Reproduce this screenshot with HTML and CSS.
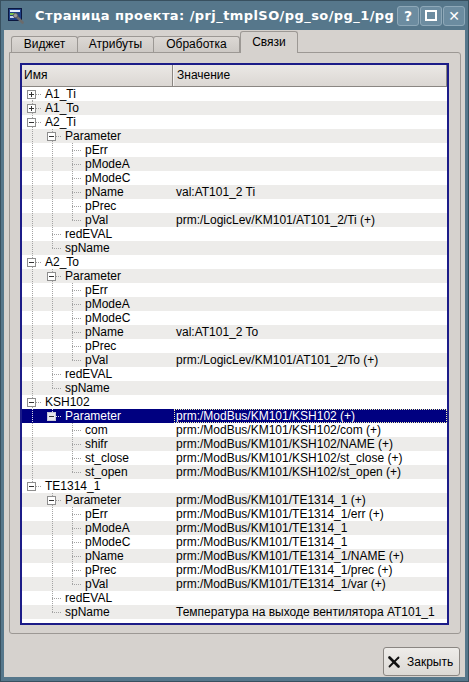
FILE: index.html
```html
<!DOCTYPE html>
<html lang="ru">
<head>
<meta charset="utf-8">
<title>Страница проекта</title>
<link rel="stylesheet" href="styles.css">
</head>
<body>
<div class="window">
  <div class="titlebar">
    <svg class="appicon" width="16" height="16" viewBox="0 0 16 16">
      <rect x="0.5" y="0.5" width="13" height="12" fill="#1f3f86" stroke="#0b173f"/>
      <rect x="2" y="2" width="10" height="2" fill="#e8f0ff"/>
      <rect x="2" y="5" width="6" height="2" fill="#7cc24a"/>
      <rect x="2" y="8" width="4" height="2" fill="#c8d4ec"/>
      <path d="M7.5 7.5 L14.5 14.5" stroke="#6b6b6b" stroke-width="2.6" stroke-linecap="round"/>
      <circle cx="7.5" cy="7.5" r="2.2" fill="#9a9a9a" stroke="#555" stroke-width="0.8"/>
    </svg>
    <div class="title">Страница проекта: /prj_tmplSO/pg_so/pg_1/pg</div>
    <div class="tbtn">?</div>
    <div class="tbtn"><span class="sq"></span></div>
    <div class="tbtn x">✕</div>
  </div>
  <div class="client">
    <div class="tabs">
      <div class="tab w1">Виджет</div>
      <div class="tab w2">Атрибуты</div>
      <div class="tab w3">Обработка</div>
      <div class="tab on">Связи</div>
    </div>
    <div class="pane">
      <div class="tree">
        <div class="hdr"><div class="hc1">Имя</div><div class="hc2">Значение</div></div>
        <div class="rows">
          <div class="row"><div class="nm"><span class="b f"><i class="box pl"></i></span><span class="t">A1_Ti</span></div><div class="vl"></div></div>
          <div class="row"><div class="nm"><span class="b tt"><i class="box pl"></i></span><span class="t">A1_To</span></div><div class="vl"></div></div>
          <div class="row"><div class="nm"><span class="b tt"><i class="box"></i></span><span class="t">A2_Ti</span></div><div class="vl"></div></div>
          <div class="row"><div class="nm"><span class="b v"></span><span class="b tt"><i class="box"></i></span><span class="t">Parameter</span></div><div class="vl"></div></div>
          <div class="row"><div class="nm"><span class="b v"></span><span class="b v"></span><span class="b tt"></span><span class="t">pErr</span></div><div class="vl"></div></div>
          <div class="row"><div class="nm"><span class="b v"></span><span class="b v"></span><span class="b tt"></span><span class="t">pModeA</span></div><div class="vl"></div></div>
          <div class="row"><div class="nm"><span class="b v"></span><span class="b v"></span><span class="b tt"></span><span class="t">pModeC</span></div><div class="vl"></div></div>
          <div class="row"><div class="nm"><span class="b v"></span><span class="b v"></span><span class="b tt"></span><span class="t">pName</span></div><div class="vl">val:AT101_2 Ti</div></div>
          <div class="row"><div class="nm"><span class="b v"></span><span class="b v"></span><span class="b tt"></span><span class="t">pPrec</span></div><div class="vl"></div></div>
          <div class="row"><div class="nm"><span class="b v"></span><span class="b v"></span><span class="b l"></span><span class="t">pVal</span></div><div class="vl">prm:/LogicLev/KM101/AT101_2/Ti (+)</div></div>
          <div class="row"><div class="nm"><span class="b v"></span><span class="b tt"></span><span class="t">redEVAL</span></div><div class="vl"></div></div>
          <div class="row"><div class="nm"><span class="b v"></span><span class="b l"></span><span class="t">spName</span></div><div class="vl"></div></div>
          <div class="row"><div class="nm"><span class="b tt"><i class="box"></i></span><span class="t">A2_To</span></div><div class="vl"></div></div>
          <div class="row"><div class="nm"><span class="b v"></span><span class="b tt"><i class="box"></i></span><span class="t">Parameter</span></div><div class="vl"></div></div>
          <div class="row"><div class="nm"><span class="b v"></span><span class="b v"></span><span class="b tt"></span><span class="t">pErr</span></div><div class="vl"></div></div>
          <div class="row"><div class="nm"><span class="b v"></span><span class="b v"></span><span class="b tt"></span><span class="t">pModeA</span></div><div class="vl"></div></div>
          <div class="row"><div class="nm"><span class="b v"></span><span class="b v"></span><span class="b tt"></span><span class="t">pModeC</span></div><div class="vl"></div></div>
          <div class="row"><div class="nm"><span class="b v"></span><span class="b v"></span><span class="b tt"></span><span class="t">pName</span></div><div class="vl">val:AT101_2 To</div></div>
          <div class="row"><div class="nm"><span class="b v"></span><span class="b v"></span><span class="b tt"></span><span class="t">pPrec</span></div><div class="vl"></div></div>
          <div class="row"><div class="nm"><span class="b v"></span><span class="b v"></span><span class="b l"></span><span class="t">pVal</span></div><div class="vl">prm:/LogicLev/KM101/AT101_2/To (+)</div></div>
          <div class="row"><div class="nm"><span class="b v"></span><span class="b tt"></span><span class="t">redEVAL</span></div><div class="vl"></div></div>
          <div class="row"><div class="nm"><span class="b v"></span><span class="b l"></span><span class="t">spName</span></div><div class="vl"></div></div>
          <div class="row"><div class="nm"><span class="b tt"><i class="box"></i></span><span class="t">KSH102</span></div><div class="vl"></div></div>
          <div class="row sel"><div class="nm"><span class="b v"></span><span class="b l"><i class="box"></i></span><span class="t">Parameter</span></div><div class="vl">prm:/ModBus/KM101/KSH102 (+)</div></div>
          <div class="row"><div class="nm"><span class="b v"></span><span class="b"></span><span class="b tt"></span><span class="t">com</span></div><div class="vl">prm:/ModBus/KM101/KSH102/com (+)</div></div>
          <div class="row"><div class="nm"><span class="b v"></span><span class="b"></span><span class="b tt"></span><span class="t">shifr</span></div><div class="vl">prm:/ModBus/KM101/KSH102/NAME (+)</div></div>
          <div class="row"><div class="nm"><span class="b v"></span><span class="b"></span><span class="b tt"></span><span class="t">st_close</span></div><div class="vl">prm:/ModBus/KM101/KSH102/st_close (+)</div></div>
          <div class="row"><div class="nm"><span class="b v"></span><span class="b"></span><span class="b l"></span><span class="t">st_open</span></div><div class="vl">prm:/ModBus/KM101/KSH102/st_open (+)</div></div>
          <div class="row"><div class="nm"><span class="b l"><i class="box"></i></span><span class="t">TE1314_1</span></div><div class="vl"></div></div>
          <div class="row"><div class="nm"><span class="b"></span><span class="b tt"><i class="box"></i></span><span class="t">Parameter</span></div><div class="vl">prm:/ModBus/KM101/TE1314_1 (+)</div></div>
          <div class="row"><div class="nm"><span class="b"></span><span class="b v"></span><span class="b tt"></span><span class="t">pErr</span></div><div class="vl">prm:/ModBus/KM101/TE1314_1/err (+)</div></div>
          <div class="row"><div class="nm"><span class="b"></span><span class="b v"></span><span class="b tt"></span><span class="t">pModeA</span></div><div class="vl">prm:/ModBus/KM101/TE1314_1</div></div>
          <div class="row"><div class="nm"><span class="b"></span><span class="b v"></span><span class="b tt"></span><span class="t">pModeC</span></div><div class="vl">prm:/ModBus/KM101/TE1314_1</div></div>
          <div class="row"><div class="nm"><span class="b"></span><span class="b v"></span><span class="b tt"></span><span class="t">pName</span></div><div class="vl">prm:/ModBus/KM101/TE1314_1/NAME (+)</div></div>
          <div class="row"><div class="nm"><span class="b"></span><span class="b v"></span><span class="b tt"></span><span class="t">pPrec</span></div><div class="vl">prm:/ModBus/KM101/TE1314_1/prec (+)</div></div>
          <div class="row"><div class="nm"><span class="b"></span><span class="b v"></span><span class="b l"></span><span class="t">pVal</span></div><div class="vl">prm:/ModBus/KM101/TE1314_1/var (+)</div></div>
          <div class="row"><div class="nm"><span class="b"></span><span class="b tt"></span><span class="t">redEVAL</span></div><div class="vl"></div></div>
          <div class="row"><div class="nm"><span class="b"></span><span class="b l"></span><span class="t">spName</span></div><div class="vl">Температура на выходе вентилятора АТ101_1</div></div>
        </div>
      </div>
    </div>
    <div class="footer">
      <div class="btn">
        <svg class="xic" width="12" height="12" viewBox="0 0 12 12">
          <path d="M1.5 1.5 L10.5 10.5" stroke="#111" stroke-width="2.6" stroke-linecap="round"/>
          <path d="M10.5 1.5 L1.5 10.5" stroke="#111" stroke-width="1.8" stroke-linecap="round"/>
        </svg>
        <span>Закрыть</span>
      </div>
    </div>
  </div>
</div>
</body>
</html>
```
FILE: styles.css
```css
html, body {
  margin: 0;
  padding: 0;
}
body {
  width: 469px;
  height: 682px;
  overflow: hidden;
  font-family: "Liberation Sans", Arial, sans-serif;
  font-size: 12px;
  color: #000;
}
.window {
  width: 469px;
  height: 682px;
  box-sizing: border-box;
  background: #56778b;
  border: 1px solid #38505f;
  padding: 0 3px 4px 3px;
  display: flex;
  flex-direction: column;
}
.titlebar {
  height: 29px;
  display: flex;
  align-items: center;
  flex: none;
}
.appicon {
  flex: none;
  margin-left: 4px;
  margin-top: 1px;
}
.title {
  flex: 1;
  min-width: 0;
  margin-left: 11px;
  margin-right: 2px;
  overflow: hidden;
  white-space: nowrap;
  color: #fff;
  font-family: "DejaVu Sans", sans-serif;
  font-weight: bold;
  font-size: 13px;
  letter-spacing: 0.42px;
}
.tbtn {
  flex: none;
  width: 20px;
  height: 18px;
  margin-left: 1px;
  border: 1px solid #8ea8b8;
  border-radius: 3px;
  background: #6c8ca0;
  color: #fff;
  font-family: "DejaVu Sans", sans-serif;
  font-weight: bold;
  font-size: 14px;
  line-height: 18px;
  text-align: center;
  display: flex;
  align-items: center;
  justify-content: center;
}
.sq {
  width: 8px;
  height: 7px;
  border: 2px solid #fff;
}
.client {
  flex: 1;
  background: #d6d2ce;
  padding: 2px 4px 1px 5px;
  display: flex;
  flex-direction: column;
}
.tabs {
  flex: none;
  height: 20px;
  display: flex;
  align-items: flex-end;
  padding-left: 2px;
}
.tab {
  box-sizing: border-box;
  height: 16px;
  line-height: 15px;
  text-align: center;
  border: 1px solid #9c9894;
  border-bottom: none;
  border-radius: 3px 3px 0 0;
  background: linear-gradient(#dcd8d4, #cdc9c5);
  margin-left: -1px;
}
.tab.w1 {
  width: 67px;
  margin-left: 0;
}
.tab.w2 {
  width: 77px;
}
.tab.w3 {
  width: 87px;
}
.tab.on {
  width: 58px;
  height: 22px;
  line-height: 20px;
  margin-bottom: -1px;
  margin-left: 0;
  background: #d6d2ce;
  position: relative;
  z-index: 1;
}
.pane {
  flex: none;
  height: 562px;
  width: 429px;
  padding: 10px 11px 8px 10px;
  border: 1px solid #9c9894;
  border-radius: 0 3px 3px 3px;
}
.tree {
  width: 429px;
  height: 562px;
  box-sizing: border-box;
  border: 2px solid #1c1c88;
  background: #fff;
  overflow: hidden;
}
.hdr {
  height: 22px;
  box-sizing: border-box;
  display: flex;
  background: linear-gradient(#ebe8e5, #dbd7d3);
  border-bottom: 1px solid #8a8682;
  border-right: 1px solid #8a8682;
  line-height: 21px;
}
.hc1 {
  width: 148px;
  padding-left: 2px;
  border-right: 1px solid #8a8682;
}
.hc2 {
  flex: 1;
  padding-left: 3px;
  border-left: 1px solid #f4f2f0;
}
.rows {
  display: flex;
  flex-direction: column;
}
.row {
  height: 14px;
  line-height: 14px;
  display: flex;
  white-space: nowrap;
}
.row:nth-child(even) {
  background: #edecea;
}
.nm {
  width: 150px;
  flex: none;
  display: flex;
  overflow: hidden;
}
.vl {
  flex: 1;
  padding-left: 4px;
  overflow: hidden;
}
.t {
  padding-left: 3px;
}
.b {
  --dc: #a3a3a3;
  flex: none;
  width: 20px;
  height: 14px;
  display: flex;
  align-items: flex-start;
  background-repeat: no-repeat;
}
.v {
  background-image: repeating-linear-gradient(to bottom, var(--dc) 0 1px, transparent 1px 2px);
  background-size: 1px 14px;
  background-position: 10px 0;
}
.tt {
  background-image:
    repeating-linear-gradient(to bottom, var(--dc) 0 1px, transparent 1px 2px),
    repeating-linear-gradient(to right, var(--dc) 0 1px, transparent 1px 2px);
  background-size: 1px 14px, 10px 1px;
  background-position: 10px 0, 10px 7px;
}
.l {
  background-image:
    repeating-linear-gradient(to bottom, var(--dc) 0 1px, transparent 1px 2px),
    repeating-linear-gradient(to right, var(--dc) 0 1px, transparent 1px 2px);
  background-size: 1px 7px, 10px 1px;
  background-position: 10px 0, 10px 7px;
}
.f {
  background-image:
    repeating-linear-gradient(to bottom, var(--dc) 0 1px, transparent 1px 2px),
    repeating-linear-gradient(to right, var(--dc) 0 1px, transparent 1px 2px);
  background-size: 1px 7px, 10px 1px;
  background-position: 10px 7px, 10px 7px;
}
.box {
  width: 9px;
  height: 9px;
  box-sizing: border-box;
  margin: 3px 0 0 5px;
  border: 1px solid #8e8e8e;
  background-color: #fff;
  background-image: linear-gradient(#333, #333);
  background-size: 5px 1px;
  background-position: 1px 3px;
  background-repeat: no-repeat;
}
.box.pl {
  background-image: linear-gradient(#333, #333), linear-gradient(#333, #333);
  background-size: 5px 1px, 1px 5px;
  background-position: 1px 3px, 3px 1px;
}
.row.sel {
  background: #000080;
  color: #fff;
}
.row.sel .b {
  --dc: #d8d8e8;
}
.row.sel .box {
  border-color: #c8c8d8;
  background-color: #e8e8ee;
}
.row.sel .vl {
  margin-left: 2px;
  padding-left: 1px;
  border: 1px dotted #f0f0b0;
  line-height: 12px;
}
.footer {
  flex: none;
  display: flex;
  justify-content: flex-end;
  margin-top: 13px;
}
.btn {
  width: 75px;
  height: 27px;
  margin-right: 1px;
  border: 1px solid #8a8682;
  border-radius: 3px;
  background: linear-gradient(#eeece9, #dcd9d5);
  display: flex;
  align-items: center;
}
.xic {
  margin-left: 4px;
  margin-top: 1px;
}
.btn span {
  margin-left: 7px;
}
```
